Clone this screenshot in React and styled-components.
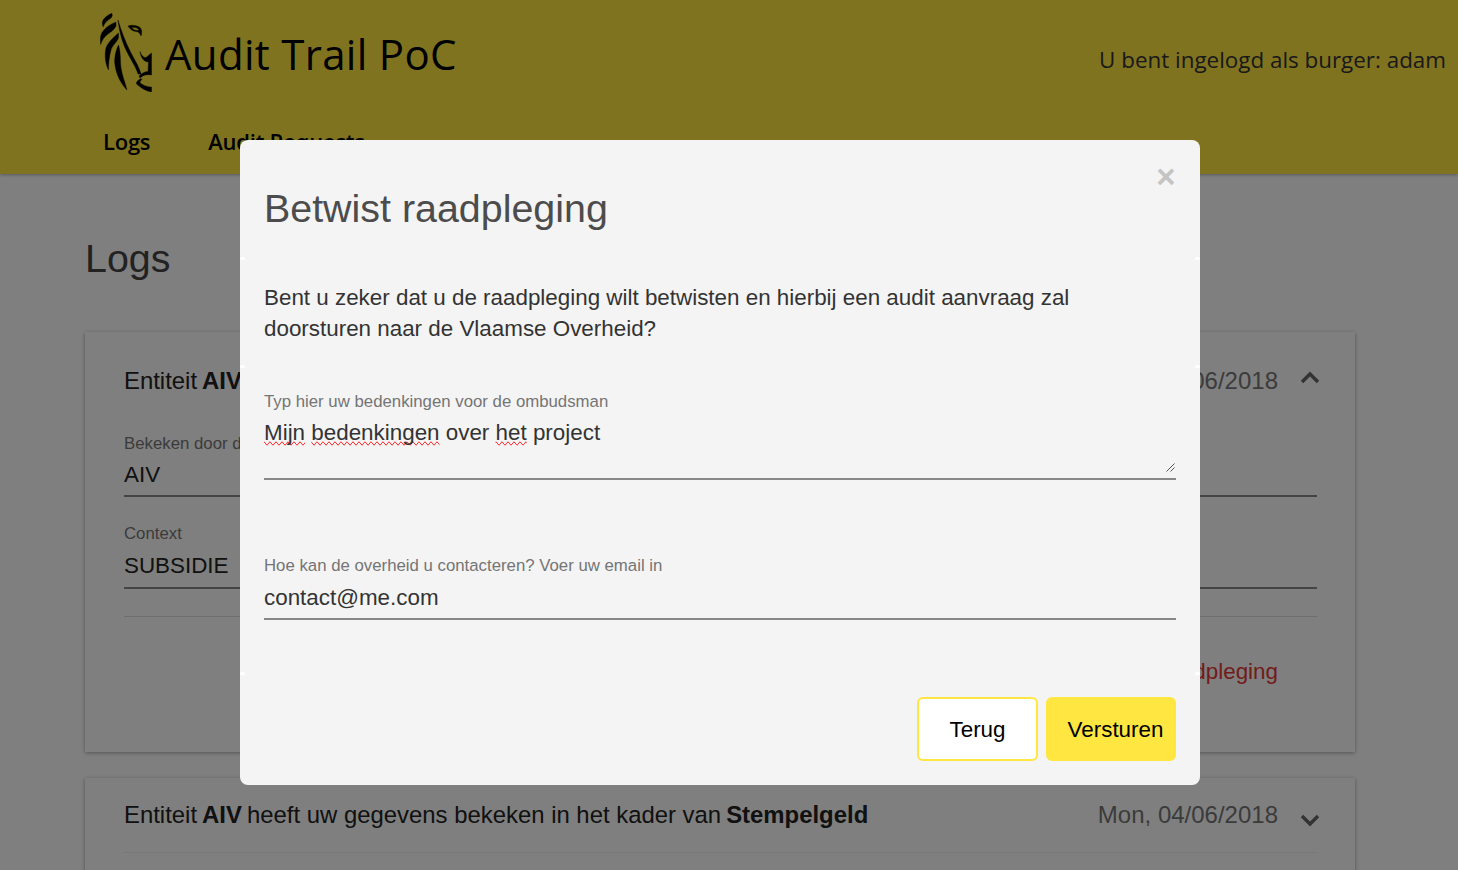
import React from 'react';
import styled, { createGlobalStyle } from 'styled-components';

const GlobalStyle = createGlobalStyle`
  html, body {
    margin: 0;
    height: 870px;
    overflow: hidden;
    background: #ffffff;
    font-family: "Liberation Sans", Arial, sans-serif;
    color: #333;
  }
  * { box-sizing: border-box; }
`;

const Header = styled.header`
  height: 174px;
  background: #ffe640;
  padding: 12px 12px 0 100px;
  box-shadow: 0 1px 3px rgba(0, 0, 0, .3);
  font-family: "Open Sans", sans-serif;
  color: #000;
`;

const Brand = styled.div`
  display: flex;
  align-items: flex-start;
  height: 80px;
`;

const Title = styled.h1`
  margin: 13px 0 0 13px;
  font-size: 42px;
  line-height: 58px;
  font-weight: 400;
  letter-spacing: .3px;
`;

const LoggedIn = styled.div`
  margin: 33px 0 0 auto;
  font-size: 22.4px;
  line-height: 30px;
  color: #333;
`;

const Nav = styled.nav`
  display: flex;
  gap: 58px;
  margin: 34px 0 0 3px;
`;

const NavItem = styled.a`
  font-size: 22px;
  line-height: 30px;
  font-weight: 600;
  letter-spacing: -.25px;
`;

const Main = styled.main`
  padding: 58px 103px 0 85px;
`;

const PageTitle = styled.h2`
  margin: 0 0 48px;
  font-size: 39.4px;
  line-height: 52px;
  font-weight: 400;
  color: #444;
`;

const Card = styled.section`
  background: #fff;
  padding: 0 38px 0 39px;
  margin-bottom: 26px;
  height: ${p => p.$height}px;
  box-shadow: 0 1px 4px rgba(0, 0, 0, .35);
`;

const CardHead = styled.div`
  display: flex;
  align-items: center;
  height: ${p => p.$open ? 98 : 75}px;
  font-size: 23.9px;
  color: #222;
  white-space: nowrap;
  ${p => !p.$open && 'border-bottom: 1px solid #eee;'}
`;

const Bold = styled.b`
  margin: 0 -1.6px;
`;

const CardDate = styled.span`
  margin-left: auto;
  font-size: 24px;
  color: #777;
`;

const Chevron = styled.svg`
  width: 24px;
  height: 24px;
  margin: 0 -5px 0 20px;
  color: #666;
  transform: translateY(${p => p.$shift}px);
`;

const Field = styled.div`
  height: ${p => p.$height}px;
  padding-top: ${p => p.$pad}px;
  border-bottom: 2px solid #888;
  font-size: 22.4px;
  line-height: 26px;
  color: #222;
`;

const FieldLabel = styled.div`
  font-size: 16.8px;
  line-height: 20px;
  color: #777;
  margin-bottom: ${p => p.$gap}px;
`;

const Divider = styled.hr`
  margin: 27px 0 0;
  border: 0;
  border-top: 1px solid #ddd;
`;

const ActionRow = styled.div`
  display: flex;
  justify-content: flex-end;
  padding: 42px 39px 0 0;
  font-size: 22.4px;
  color: #e53935;
`;

const Overlay = styled.div`
  position: fixed;
  inset: 0;
  background: rgba(0, 0, 0, .5);
`;

const Modal = styled.div`
  position: relative;
  width: 960px;
  height: 645px;
  margin: 140px auto 0 240px;
  padding: 43px 24px 24px;
  background: #f4f4f4;
  border-radius: 8px;
  display: flex;
  flex-direction: column;
`;

const EdgeMark = styled.i`
  position: absolute;
  top: ${p => p.$top}px;
  ${p => p.$side}: 0;
  width: 5px;
  height: 3px;
  background: #fff;
  border-radius: 2px;
`;

const Close = styled.button`
  position: absolute;
  top: 24px;
  right: 22px;
  width: 24px;
  height: 26px;
  padding: 0;
  border: 0;
  background: none;
  color: #c4c4c4;
  font: 700 33px/26px "Liberation Sans", sans-serif;
`;

const ModalTitle = styled.h2`
  margin: 0;
  font-size: 39.4px;
  line-height: 50px;
  font-weight: 400;
  color: #4c4c4c;
`;

const ModalText = styled.p`
  margin: 49px 0 0;
  font-size: 22.4px;
  line-height: 31px;
  color: #333;
`;

const Input = styled.div`
  position: relative;
  height: ${p => p.$height}px;
  margin-top: ${p => p.$top}px;
  border-bottom: 2px solid #888;
  font-size: 22.4px;
  line-height: 30px;
  color: #333;
`;

const InputLabel = styled.div`
  font-size: 16.8px;
  line-height: 20px;
  margin-bottom: ${p => p.$gap}px;
  color: #757575;
`;

const Misspelled = styled.span`
  text-decoration-line: spelling-error;
`;

const ResizeGrip = styled.svg`
  position: absolute;
  right: 1px;
  bottom: 6px;
  width: 9px;
  height: 9px;
  color: #555;
`;

const Footer = styled.div`
  display: flex;
  justify-content: flex-end;
  gap: 8px;
  margin-top: auto;
`;

const Button = styled.button`
  height: 64px;
  width: ${p => p.$width}px;
  padding: ${p => p.$primary ? '2px 0 0 9px' : '2px 0 0'};
  border: 2px solid #ffe640;
  border-radius: 6px;
  background: ${p => p.$primary ? '#ffe640' : '#fff'};
  color: #000;
  font: 400 22.4px "Liberation Sans", sans-serif;
`;

const ChevronIcon = ({ up }) => (
  <Chevron viewBox="0 0 24 24" fill="none" stroke="currentColor" strokeWidth="3.4" $shift={up ? -3 : 5}>
    <path d={up ? 'M4 16l8-8 8 8' : 'M4 8l8 8 8-8'} />
  </Chevron>
);

// Vlaamse leeuw, drawn by hand
const Logo = () => (
  <svg width="52" height="80" viewBox="0 0 52 80" fill="#000" fillRule="evenodd" stroke="#000" strokeWidth=".4">
    <path d="M11.700 1.300C8 3 3.500 6 2.500 9.500 2 11.500 2.600 13.500 3.300 15 4 11 8 8 11 6c1.500-1.500 1.500-3.500.7-4.700z" />
    <path d="M16 10C11 12 6 15 3 19 .5 22-.2 27 .7 32.500 2 28 4 25 8 22c3-2 7-5 8-8z" />
    <path d="M18.500 21C14 25 8 30 6 36c-1.500 6-1 15 2.500 22 0-6 .5-13 2.500-20 1.500-5 6-8 7.500-12z" />
    <path d="M18 8c1.500 12 4 22 9 32 4 8 9 15 11 22h3c-2-8-7-15-11-23C25 29 21 18 18 8z" />
    <path d="M18.500 33c-3 6-4.500 14-3.500 20 1 9 6 19 12 25-2-8-5-15-6-22-1-8 0-15-2.500-23z" />
    <path d="M28 14c4-1.500 10-.5 12.500 2 1.500 2 1.500 5 .5 8-1-3-3-4.500-5-4.500-3 0-6-2.500-8-5.500zM32 15.500c1 2.500 5 3.500 7 2.500-1-2-4-3-7-2.500z" />
    <path d="M40 39.500c1.500 4.500 4 6.500 6 6l5.500-4.500v22c-4.500-1-8.500 0-11.500 3l-1-2c3-3 6-4.500 9-4.500l.5-9.500c-4.500 0-7.500-4-8.500-10.500z" />
    <path d="M41 66.500c-3 1.500-5 3.500-4.500 5.500 4.500 4 9.500 7 15 8v-5c-4.500 0-9.500-2-11.500-4.500 0-1.500 1-2.500 2-3z" />
  </svg>
);

const edgeMarks = [117, 225, 532];

export default function App() {
  return (
    <>
      <GlobalStyle />
      <Header>
        <Brand>
          <Logo />
          <Title>Audit Trail PoC</Title>
          <LoggedIn>U bent ingelogd als burger: adam</LoggedIn>
        </Brand>
        <Nav>
          <NavItem>Logs</NavItem>
          <NavItem>Audit Requests</NavItem>
        </Nav>
      </Header>
      <Main>
        <PageTitle>Logs</PageTitle>
        <Card $height={420}>
          <CardHead $open>
            <span>Entiteit <Bold>AIV</Bold> heeft uw gegevens bekeken in het kader van <Bold>Subsidie</Bold></span>
            <CardDate>Mon, 04/06/2018</CardDate>
            <ChevronIcon up />
          </CardHead>
          <Field $height={67} $pad={4}>
            <FieldLabel $gap={8}>Bekeken door de entiteit</FieldLabel>
            AIV
          </Field>
          <Field $height={92} $pad={27}>
            <FieldLabel $gap={9}>Context</FieldLabel>
            SUBSIDIE
          </Field>
          <Divider />
          <ActionRow>Betwist raadpleging</ActionRow>
        </Card>
        <Card $height={200}>
          <CardHead>
            <span>Entiteit <Bold>AIV</Bold> heeft uw gegevens bekeken in het kader van <Bold>Stempelgeld</Bold></span>
            <CardDate>Mon, 04/06/2018</CardDate>
            <ChevronIcon />
          </CardHead>
        </Card>
      </Main>
      <Overlay>
        <Modal>
          {edgeMarks.map(top => (
            <React.Fragment key={top}>
              <EdgeMark $top={top} $side="left" />
              <EdgeMark $top={top} $side="right" />
            </React.Fragment>
          ))}
          <Close>×</Close>
          <ModalTitle>Betwist raadpleging</ModalTitle>
          <ModalText>
            Bent u zeker dat u de raadpleging wilt betwisten en hierbij een audit aanvraag zal
            <br />
            doorsturen naar de Vlaamse Overheid?
          </ModalText>
          <Input $height={88} $top={48}>
            <InputLabel $gap={6}>Typ hier uw bedenkingen voor de ombudsman</InputLabel>
            <Misspelled>Mijn</Misspelled> <Misspelled>bedenkingen</Misspelled> over <Misspelled>het</Misspelled> project
            <ResizeGrip viewBox="0 0 9 9" stroke="currentColor" strokeWidth="1">
              <path d="M8.500 .5l-8 8M8.500 4.500l-4 4" />
            </ResizeGrip>
          </Input>
          <Input $height={64} $top={76}>
            <InputLabel $gap={7}>Hoe kan de overheid u contacteren? Voer uw email in</InputLabel>
            contact@me.com
          </Input>
          <Footer>
            <Button $width={121}>Terug</Button>
            <Button $width={130} $primary>Versturen</Button>
          </Footer>
        </Modal>
      </Overlay>
    </>
  );
}
